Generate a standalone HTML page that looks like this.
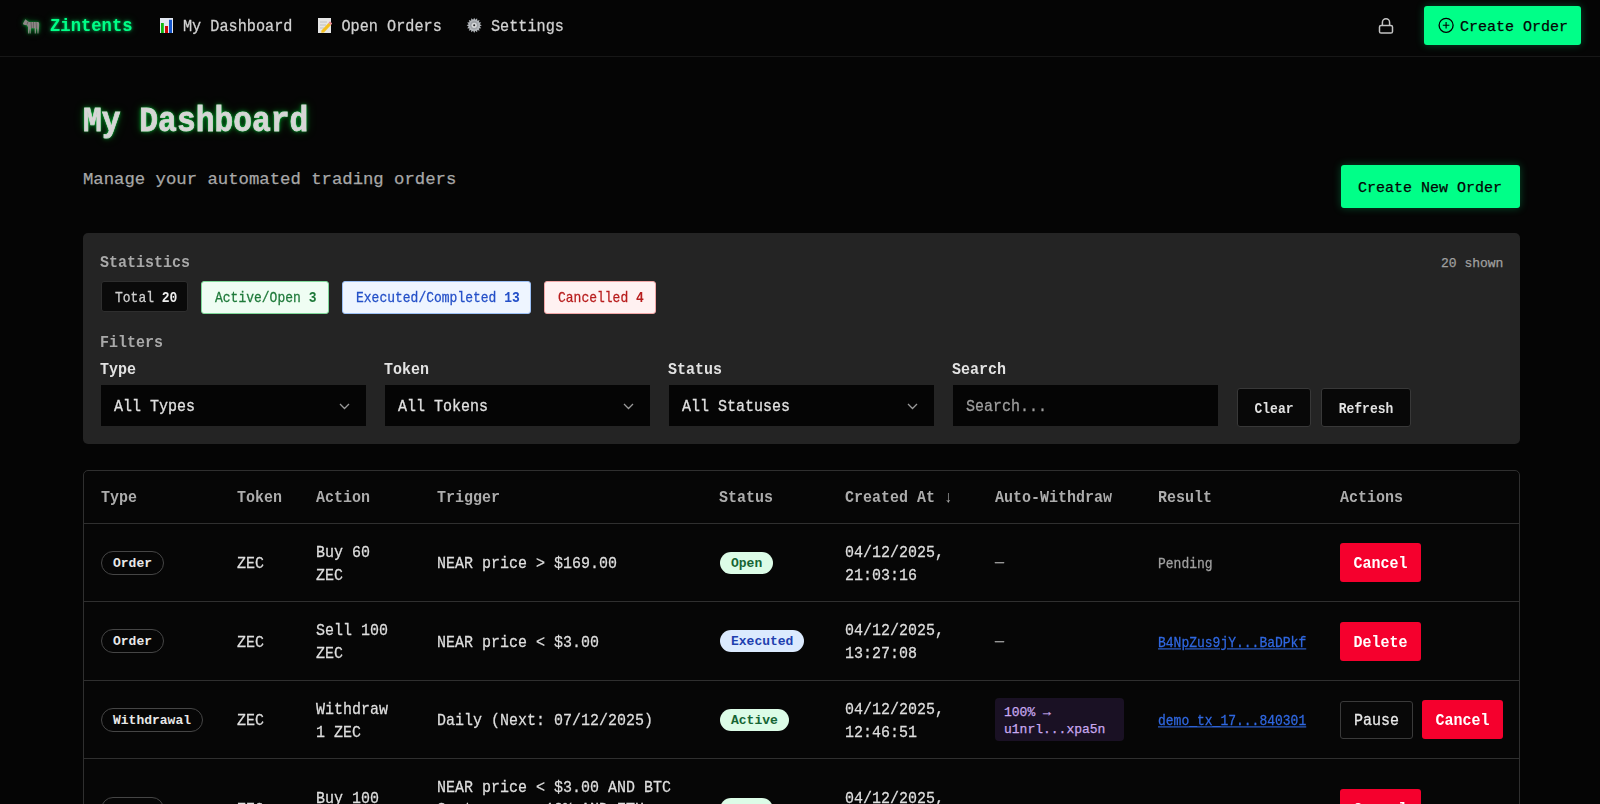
<!DOCTYPE html>
<html><head><meta charset="utf-8">
<style>
*{box-sizing:border-box;margin:0;padding:0}
html,body{width:1600px;height:804px;overflow:hidden;background:#050505;font-family:"Liberation Mono",monospace;color:#d4d4d4;-webkit-text-stroke:0.25px currentColor}
.abs{position:absolute}
.t{position:absolute;white-space:nowrap}
.nav{position:absolute;left:0;top:0;width:1600px;height:57px;background:#050505;border-bottom:1px solid #171717}
.logo{left:50px;top:17px;transform:scaleY(1.08);transform-origin:0 15px;font-size:17.2px;line-height:20px;font-weight:bold;color:#00ff88;text-shadow:0 0 3px rgba(0,255,120,.7),0 0 8px rgba(0,255,120,.35)}
.navi{font-size:15.2px;line-height:20px;color:#d2d2d2;top:17px;transform:scaleY(1.07);transform-origin:0 15px}
.btn-green{background:#00ff88;color:#050505;border-radius:3px;box-shadow:0 0 9px rgba(0,255,136,.28)}
.panel{position:absolute;left:83px;top:233px;width:1437px;height:211px;background:#242424;border-radius:5px}
.chip{position:absolute;top:281px;height:33px;border:1px solid;border-radius:3px;font-size:13px;line-height:27px;padding-top:3px;padding-left:13px;white-space:nowrap}
.lbl{font-size:15px;line-height:20px;font-weight:bold;color:#a9a9a9;transform:scaleY(1.09);transform-origin:0 70%}
.flabel{font-size:15px;line-height:20px;font-weight:bold;color:#e2e2e2;top:361px;transform:scaleY(1.1);transform-origin:0 70%}
.sel{position:absolute;top:385px;width:265px;height:41px;background:#050505;font-size:15px;line-height:37px;padding-top:4px;padding-left:13px;color:#e0e0e0;white-space:nowrap}
.chev{position:absolute;left:238px;top:18px}
.sbtn{position:absolute;top:388px;height:39px;background:#080808;border:1px solid #383838;border-radius:3px;font-size:13px;font-weight:bold;line-height:33px;padding-top:4px;text-align:center;color:#e2e2e2}
.table{position:absolute;left:83px;top:470px;width:1437px;height:400px;border:1px solid #2f2f2f;border-radius:5px;background:#060606;overflow:hidden}
.th{position:absolute;left:0;top:0;height:53px;width:1437px;border-bottom:1px solid #2f2f2f}
.th > span{position:absolute;top:18px;transform:scaleY(1.09);transform-origin:0 70%;font-size:15px;line-height:20px;font-weight:bold;color:#acacac;white-space:nowrap}
.row{position:absolute;left:0;width:1437px;border-bottom:1px solid #2f2f2f}
.c{position:absolute;top:0;height:100%;display:flex;align-items:center;font-size:15px;line-height:21px;color:#dedede;white-space:nowrap}
.x{position:relative;top:2px;display:inline-block;transform:scaleY(1.08)}
.sy{display:inline-block;transform:scaleY(1.09);transform-origin:50% 60%}
.pill{border:1px solid #454545;border-radius:12px;height:24px;line-height:20px;padding-top:2px;font-size:13px;font-weight:bold;padding-left:11px;padding-right:11px;color:#e8e8e8;position:relative;top:0px}
.st{border-radius:11px;height:22px;line-height:20px;padding-top:2px;font-size:13px;font-weight:bold;padding-left:11px;padding-right:11px;position:relative;top:0px;left:1px}
.red,.pill,.st,.sbtn,.lbl,.flabel,.th > span,.chip b,.logo{-webkit-text-stroke:0}
.st.open{background:#dcfce7;color:#166534}
.st.exec{background:#dbeafe;color:#1e40af}
.red{display:inline-block;background:#f5002d;color:#fff;border-radius:3px;height:39px;line-height:35px;padding-top:4px;font-size:15px;font-weight:bold;width:81px;text-align:center}
.gbtn{display:inline-block;background:#080808;border:1px solid #3a3a3a;border-radius:3px;height:38px;line-height:33px;padding-top:3px;font-size:15px;width:73px;text-align:center;color:#e8e8e8}
.aw{display:block;background:#1a1124;color:#c9a8ef;border-radius:4px;width:129px;height:43px;padding:6px 9px 0;font-size:13px;line-height:17px}
.dash{color:#9a9a9a}
.muted{font-size:13px;color:#a0a0a0}
.link{font-size:13px;color:#3068e2;text-decoration:underline}
</style></head><body>

<div class="nav">
  <svg class="abs" style="left:22px;top:18px;filter:drop-shadow(0 0 1.5px rgba(0,200,60,.8)) drop-shadow(0 0 3px rgba(0,200,60,.3))" width="18" height="16" viewBox="0 0 18 16">
    <path d="M1 5.6 L2.8 2.2 L3.4 1.2 L4.6 2.2 L7 4 L16.5 4 L17.2 5.5 L17 10 L16.4 15.5 L15.5 15.5 L15 10.2 L14.2 10.2 L13.8 15.5 L12.8 15.5 L12.6 10.2 L9 10.2 L8.6 15.5 L7.6 15.5 L7.3 10.5 L6.8 15.5 L6 15.5 L6 9.2 L5 7.2 L3 6.9 L1.3 6.6 Z" fill="#8c8886"/>
    <path d="M6 3.5 L5 6.5 M9 4 L9.5 10 M11.5 4 L11.3 10 M14 4 L14.5 10" stroke="#555150" stroke-width=".7"/>
  </svg>
  <div class="t logo">Zintents</div>

  <svg class="abs" style="left:160px;top:18px" width="13" height="15" viewBox="0 0 13 15">
    <rect x="0" y="0" width="13" height="15" fill="#e3e8f1"/>
    <rect x="1" y="5" width="2.8" height="10" fill="#0fb80f"/>
    <rect x="5" y="8" width="3" height="7" fill="#cc0808"/>
    <rect x="9" y="1.8" width="3" height="13.2" fill="#1657cc"/>
  </svg>
  <div class="t navi" style="left:183px">My Dashboard</div>

  <svg class="abs" style="left:318px;top:18px" width="14" height="15" viewBox="0 0 14 15">
    <rect x="0" y="0" width="13" height="15" fill="#e6e6e6"/>
    <path d="M2 4h7M2 7h6M2 10h4" stroke="#b8b8b8" stroke-width=".8"/>
    <path d="M3.5 12.5 L10.5 5 L13 7 L6 14.5 L3.2 14.8 Z" fill="#f4c020"/>
    <path d="M10.5 5 L12 3.3 L14.3 5.5 L13 7Z" fill="#e88890"/>
  </svg>
  <div class="t navi" style="left:341.5px">Open Orders</div>

  <svg class="abs" style="left:466px;top:17px" width="17" height="17" viewBox="0 0 17 17">
    <path d="M15.80 8.30 L13.69 9.39 L15.22 11.21 L12.86 11.41 L13.57 13.67 L11.31 12.96 L11.11 15.32 L9.29 13.79 L8.20 15.90 L7.11 13.79 L5.29 15.32 L5.09 12.96 L2.83 13.67 L3.54 11.41 L1.18 11.21 L2.71 9.39 L0.60 8.30 L2.71 7.21 L1.18 5.39 L3.54 5.19 L2.83 2.93 L5.09 3.64 L5.29 1.28 L7.11 2.81 L8.20 0.70 L9.29 2.81 L11.11 1.28 L11.31 3.64 L13.57 2.93 L12.86 5.19 L15.22 5.39 L13.69 7.21Z" fill="#b4b8bc"/>
    <circle cx="8.2" cy="8.3" r="4.2" fill="#9ea2a6"/>
    <circle cx="8.2" cy="8.3" r="2.6" fill="#d8dadc"/>
    <circle cx="8.2" cy="8.3" r="1" fill="#202020"/>
  </svg>
  <div class="t navi" style="left:491px">Settings</div>

  <svg class="abs" style="left:1378px;top:17px" width="16" height="18" viewBox="0 0 16 18">
    <path d="M4.4 8.5 V5.4 A3.6 3.6 0 0 1 11.6 5.4 V8.5" fill="none" stroke="#c4c4c4" stroke-width="1.5"/>
    <rect x="1.5" y="8.4" width="13" height="7.6" rx="1.6" fill="none" stroke="#c4c4c4" stroke-width="1.5"/>
  </svg>

  <div class="abs btn-green" style="left:1424px;top:6px;width:157px;height:39px">
    <svg class="abs" style="left:14px;top:11px" width="17" height="17" viewBox="0 0 17 17">
      <circle cx="8.1" cy="8.3" r="7" fill="none" stroke="#000" stroke-width="1.3"/>
      <path d="M8.1 5V11.6M4.8 8.3H11.4" stroke="#000" stroke-width="1.1"/>
    </svg>
    <div class="t" style="left:36px;top:12px;font-size:15px;line-height:20px;color:#050505">Create Order</div>
  </div>
</div>

<div class="t" style="left:83px;top:103px;font-size:31.3px;line-height:40px;font-weight:bold;color:#d6d6d6;transform:scaleY(1.1);transform-origin:0 29px;-webkit-text-stroke:0.7px #d6d6d6;text-shadow:0 0 2px rgba(0,235,60,1),0 0 5px rgba(0,255,70,.55),0 0 10px rgba(0,255,70,.25)">My Dashboard</div>
<div class="t" style="left:83px;top:169px;font-size:17.3px;line-height:22px;color:#a8a8a8">Manage your automated trading orders</div>
<div class="abs btn-green" style="left:1341px;top:165px;width:179px;height:43px;box-shadow:0 0 8px rgba(0,255,136,.28)">
  <div class="t" style="left:17px;top:14px;font-size:15px;line-height:20px;color:#050505">Create New Order</div>
</div>

<div class="panel"></div>
<div class="t lbl" style="left:100px;top:254px">Statistics</div>
<div class="t" style="left:1441px;top:255px;font-size:13px;line-height:18px;color:#a0a0a0">20 shown</div>

<div class="chip" style="left:101px;top:281px;height:31px;line-height:27px;width:87px;background:#0a0a0a;border-color:#2e2e2e;color:#cfcfcf"><span class="sy">Total <b style="color:#eee">20</b></span></div>
<div class="chip" style="left:201px;width:128px;background:#effdf3;border-color:#7fd99a;color:#1f7a3a"><span class="sy">Active/Open <b>3</b></span></div>
<div class="chip" style="left:342px;width:189px;background:#eef5ff;border-color:#9cc0f5;color:#2450c8"><span class="sy">Executed/Completed <b>13</b></span></div>
<div class="chip" style="left:544px;width:112px;background:#fff1f1;border-color:#f3a7a7;color:#b81d1d"><span class="sy">Cancelled <b>4</b></span></div>

<div class="t lbl" style="left:100px;top:334px">Filters</div>
<div class="t flabel" style="left:100px">Type</div>
<div class="t flabel" style="left:384px">Token</div>
<div class="t flabel" style="left:668px">Status</div>
<div class="t flabel" style="left:952px">Search</div>

<div class="sel" style="left:101px"><span class="sy">All Types</span><svg class="chev" width="11" height="7" viewBox="0 0 11 7"><path d="M1 1 L5.5 5.5 L10 1" fill="none" stroke="#9a9a9a" stroke-width="1.3"/></svg></div>
<div class="sel" style="left:385px"><span class="sy">All Tokens</span><svg class="chev" width="11" height="7" viewBox="0 0 11 7"><path d="M1 1 L5.5 5.5 L10 1" fill="none" stroke="#9a9a9a" stroke-width="1.3"/></svg></div>
<div class="sel" style="left:669px"><span class="sy">All Statuses</span><svg class="chev" width="11" height="7" viewBox="0 0 11 7"><path d="M1 1 L5.5 5.5 L10 1" fill="none" stroke="#9a9a9a" stroke-width="1.3"/></svg></div>
<div class="sel" style="left:953px;color:#9e9e9e"><span class="sy">Search...</span></div>

<div class="sbtn" style="left:1237px;width:74px"><span class="sy">Clear</span></div>
<div class="sbtn" style="left:1321px;width:90px"><span class="sy">Refresh</span></div>

<div class="table">
  <div class="th">
    <span style="left:17px">Type</span>
    <span style="left:153px">Token</span>
    <span style="left:232px">Action</span>
    <span style="left:353px">Trigger</span>
    <span style="left:635px">Status</span>
    <span style="left:761px">Created At ↓</span>
    <span style="left:911px">Auto-Withdraw</span>
    <span style="left:1074px">Result</span>
    <span style="left:1256px">Actions</span>
  </div>
  <!-- row 1 -->
  <div class="row" style="top:53px;height:78px">
    <div class="c" style="left:17px"><span class="pill">Order</span></div>
    <div class="c" style="left:153px"><span class="x">ZEC</span></div>
    <div class="c" style="left:232px"><span class="x">Buy 60<br>ZEC</span></div>
    <div class="c" style="left:353px"><span class="x">NEAR price &gt; $169.00</span></div>
    <div class="c" style="left:635px"><span class="st open">Open</span></div>
    <div class="c" style="left:761px"><span class="x">04/12/2025,<br>21:03:16</span></div>
    <div class="c dash" style="left:911px"><span class="x" style="top:1px">—</span></div>
    <div class="c muted" style="left:1074px"><span class="x">Pending</span></div>
    <div class="c" style="left:1256px"><span class="red"><span class="sy">Cancel</span></span></div>
  </div>
  <!-- row 2 -->
  <div class="row" style="top:131px;height:79px">
    <div class="c" style="left:17px"><span class="pill">Order</span></div>
    <div class="c" style="left:153px"><span class="x">ZEC</span></div>
    <div class="c" style="left:232px"><span class="x">Sell 100<br>ZEC</span></div>
    <div class="c" style="left:353px"><span class="x">NEAR price &lt; $3.00</span></div>
    <div class="c" style="left:635px"><span class="st exec">Executed</span></div>
    <div class="c" style="left:761px"><span class="x">04/12/2025,<br>13:27:08</span></div>
    <div class="c dash" style="left:911px"><span class="x" style="top:1px">—</span></div>
    <div class="c link" style="left:1074px"><span class="x">B4NpZus9jY...BaDPkf</span></div>
    <div class="c" style="left:1256px"><span class="red"><span class="sy">Delete</span></span></div>
  </div>
  <!-- row 3 -->
  <div class="row" style="top:210px;height:78px">
    <div class="c" style="left:17px"><span class="pill">Withdrawal</span></div>
    <div class="c" style="left:153px"><span class="x">ZEC</span></div>
    <div class="c" style="left:232px"><span class="x">Withdraw<br>1 ZEC</span></div>
    <div class="c" style="left:353px"><span class="x">Daily (Next: 07/12/2025)</span></div>
    <div class="c" style="left:635px"><span class="st open">Active</span></div>
    <div class="c" style="left:761px"><span class="x">04/12/2025,<br>12:46:51</span></div>
    <div class="c" style="left:911px"><span class="aw">100% →<br>u1nrl...xpa5n</span></div>
    <div class="c link" style="left:1074px"><span class="x">demo_tx_17...840301</span></div>
    <div class="c" style="left:1256px"><span class="gbtn"><span class="sy">Pause</span></span><span class="red" style="margin-left:9px"><span class="sy">Cancel</span></span></div>
  </div>
  <!-- row 4 -->
  <div class="row" style="top:288px;height:100px">
    <div class="c" style="left:17px"><span class="pill">Order</span></div>
    <div class="c" style="left:153px"><span class="x">ZEC</span></div>
    <div class="c" style="left:232px"><span class="x">Buy 100<br>ZEC</span></div>
    <div class="c" style="left:353px"><span class="x">NEAR price &lt; $3.00 AND BTC<br>Sent: over +10% AND ETH<br>price &gt; $3000</span></div>
    <div class="c" style="left:635px"><span class="st open">Open</span></div>
    <div class="c" style="left:761px"><span class="x">04/12/2025,<br>10:15:42</span></div>
    <div class="c dash" style="left:911px"><span class="x" style="top:1px">—</span></div>
    <div class="c muted" style="left:1074px"><span class="x" style="top:6px">Pending</span></div>
    <div class="c" style="left:1256px"><span class="red"><span class="sy">Cancel</span></span></div>
  </div>
</div>

</body></html>
